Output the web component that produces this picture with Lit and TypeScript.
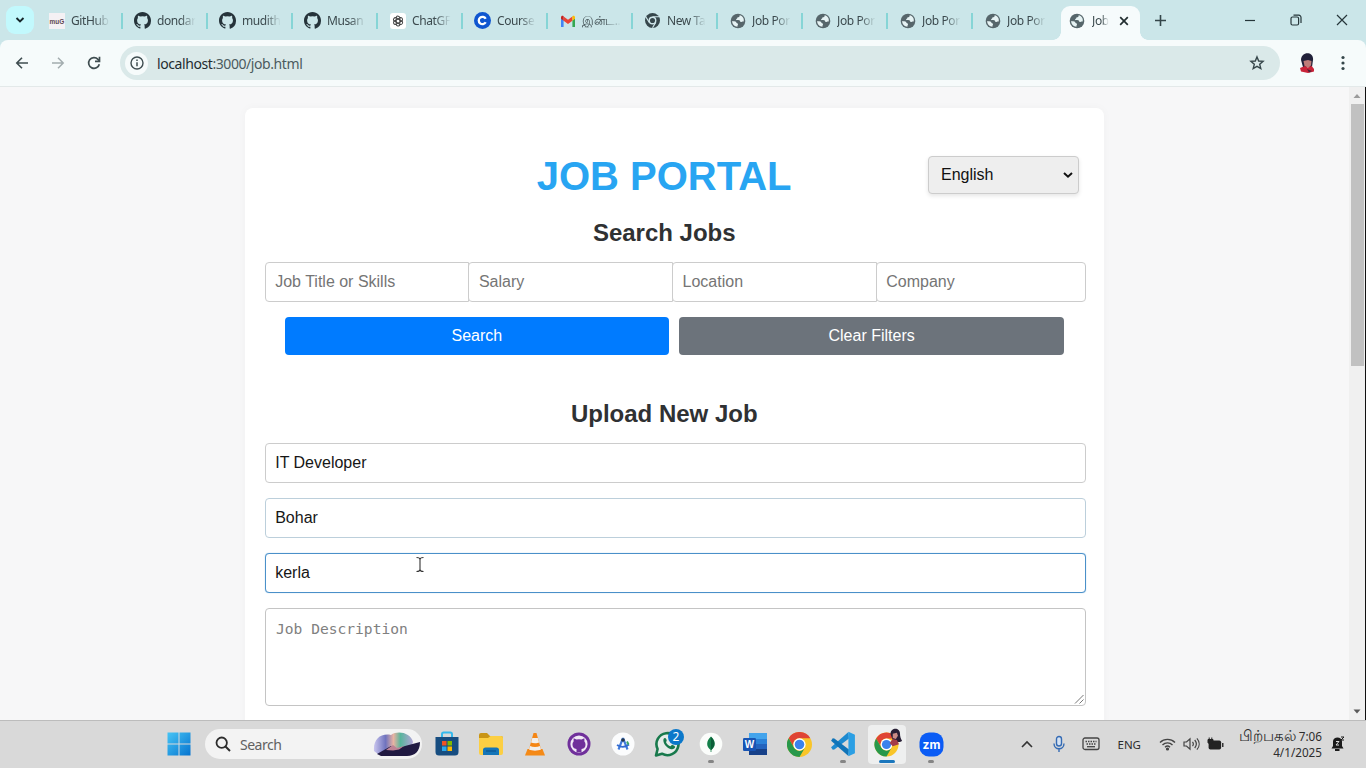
import { LitElement, html, css, svg } from "lit";
import { customElement } from "lit/decorators.js";
import { classMap } from "lit/directives/class-map.js";

type Tab = { icon: string; label: string; active?: boolean };

const github = html`<svg width="17" height="17" viewBox="0 0 16 16"><path fill="#25333a" d="M8 0C3.58 0 0 3.58 0 8c0 3.54 2.29 6.53 5.47 7.59.4.07.55-.17.55-.38v-1.33c-2.01.37-2.53-.49-2.69-.94-.09-.23-.48-.94-.82-1.13-.28-.15-.68-.52-.01-.53.63-.01 1.08.58 1.23.82.72 1.21 1.87.87 2.33.66.07-.52.28-.87.51-1.07-1.78-.2-3.64-.89-3.64-3.95 0-.87.31-1.59.82-2.15-.08-.2-.36-1.02.08-2.12 0 0 .67-.21 2.2.82a7.6 7.6 0 0 1 4 0c1.53-1.04 2.2-.82 2.2-.82.44 1.1.16 1.92.08 2.12.51.56.82 1.27.82 2.15 0 3.07-1.87 3.75-3.65 3.95.29.25.54.73.54 1.48v2.19c0 .21.15.46.55.38A8 8 0 0 0 16 8c0-4.42-3.58-8-8-8z"/></svg>`;
const globe = html`<svg width="16" height="16" viewBox="0 0 16 16"><circle cx="8" cy="8" r="7.3" fill="#56666b"/><path fill="#e6f3f4" d="M9.600 2.300c.3 1.600-.7 2-1.800 2-.6.1-.3 1.100-1 1.400-.8.300-.9.900-.4 1.200.7.400 2.600-.1 3.400.7.500.6.200 1.300 1 1.500.9.200 1.300-.9 2.900-.7C14.400 5.500 12.600 3 9.600 2.300zM2.200 7.900c1.400.2 3 .2 3.700.9.700.7.300 1.300 1.200 1.500 1 .2 1.200 1.100.6 1.900-.4.600-.2 1-.2 1.500C4.600 13.500 2 11 2.200 7.900z"/></svg>`;

const chromeArt = (red: string, yellow: string, green: string, blue: string) => svg`
  <circle cx="12" cy="12" r="12" fill="${yellow}"/>
  <path fill="${red}" d="M1.600 6a12 12 0 0 1 20.800 0H12a6 6 0 0 0-5.200 9z"/>
  <path fill="${green}" d="M1.600 6A12 12 0 0 0 12 24l5.200-9a6 6 0 0 1-10.400 0z"/>
  <circle cx="12" cy="12" r="5.900" fill="#fff"/><circle cx="12" cy="12" r="4.600" fill="${blue}"/>`;

const favicons: Record<string, unknown> = {
  mug: html`<svg width="16" height="16" viewBox="0 0 16 16"><rect width="16" height="16" fill="#f4f1f4"/><text x="8" y="10.500" text-anchor="middle" font-family="Liberation Sans" font-weight="700" font-size="6.500" fill="#5d4850">muG</text></svg>`,
  github,
  globe,
  gpt: html`<svg width="16" height="16" viewBox="0 0 16 16"><rect width="16" height="16" rx="3" fill="#fff"/><g fill="none" stroke="#444" stroke-width="1.300" transform="translate(1.800 1.800) scale(.78)">${[0, 60, 120, 180, 240, 300].map(
    (a) => svg`<path transform="rotate(${a} 8 8)" d="M8 5.300l2.400 1.400V3.900A2.500 2.500 0 0 0 5.700 3v3.600"/>`
  )}</g></svg>`,
  coursera: html`<svg width="17" height="17" viewBox="0 0 17 17"><circle cx="8.500" cy="8.500" r="8.500" fill="#0f56d0"/><path d="M11.700 6.700a3.700 3.700 0 1 0 0 3.600" fill="none" stroke="#fff" stroke-width="2.300"/></svg>`,
  gmail: html`<svg width="16" height="16" viewBox="0 0 16 16"><path fill="#4285f4" d="M1 14h2.600V7.300L1 5.300z"/><path fill="#34a853" d="M12.400 14H15V5.300l-2.600 2z"/><path fill="#ea4335" d="M3.600 7.700V3.400L8 6.700l4.400-3.300v4.300L8 11z"/><path fill="#c5221f" d="M1 4.300v1.500l2.600 1.900V3.300C2.500 2.200 1 3 1 4.300z"/><path fill="#fbbc04" d="M15 4.300v1.500l-2.600 1.900V3.300C13.500 2.200 15 3 15 4.300z"/></svg>`,
  chrome: html`<svg width="15" height="15" viewBox="0 0 24 24"><circle cx="12" cy="12" r="12" fill="#36474c"/><circle cx="12" cy="12" r="5.200" fill="#36474c" stroke="#cfe6ea" stroke-width="2.200"/><path d="M12 6h10.500M6.800 15L1.500 6.300M17.200 15L12 23.500" stroke="#cfe6ea" stroke-width="1.800"/></svg>`,
};

const tabs: Tab[] = [
  { icon: "mug", label: "GitHub" },
  { icon: "github", label: "dondar" },
  { icon: "github", label: "mudith" },
  { icon: "github", label: "Musan" },
  { icon: "gpt", label: "ChatGF" },
  { icon: "coursera", label: "Course" },
  { icon: "gmail", label: "இன்ட..." },
  { icon: "chrome", label: "New Ta" },
  { icon: "globe", label: "Job Por" },
  { icon: "globe", label: "Job Por" },
  { icon: "globe", label: "Job Por" },
  { icon: "globe", label: "Job Por" },
  { icon: "globe", label: "Job", active: true },
];

@customElement("browser-chrome")
class BrowserChrome extends LitElement {
  static styles = css`
    :host { display: block; font-family: "Noto Sans", "Open Sans", sans-serif; color: #3c4a4e; }
    svg { display: block; flex: none; }
    .strip { height: 40px; background: #cbe6e9; display: flex; align-items: stretch; padding-left: 6px; }
    .search-tabs { width: 28px; height: 28px; margin: 6px 4px 0 0; border-radius: 9px; background: #c2f9fd; display: grid; place-items: center; }
    .tab { width: 85px; flex: none; box-sizing: border-box; height: 40px; display: flex; align-items: center; padding: 1px 0 0 10px; }
    .fav { width: 17px; flex: none; display: grid; place-items: center; }
    .label { width: 42px; flex: none; margin-left: 6px; font-size: 12px; line-height: 20px; letter-spacing: -0.4px; white-space: nowrap; -webkit-mask-image: linear-gradient(90deg, #000 55%, transparent 92%); mask-image: linear-gradient(90deg, #000 55%, transparent 92%); }
    .sep { width: 2px; flex: none; height: 16px; background: #86d5d6; margin-left: 8px; }
    .tab:nth-child(n + 3):not(.active) { padding-left: 11px; }
    .tab:nth-child(n + 3):not(.active) .sep { margin-left: 7px; }
    .active { width: 79px; height: 34px; margin: 6px 0 0 3px; padding: 0 0 5px 7px; background: #f6fbfc; border-radius: 9px 9px 0 0; position: relative; }
    .active::before, .active::after { content: ""; position: absolute; bottom: 0; width: 8px; height: 8px; }
    .active::before { left: -8px; background: radial-gradient(circle at 0 0, transparent 7.5px, #f6fbfc 8px); }
    .active::after { right: -8px; background: radial-gradient(circle at 100% 0, transparent 7.5px, #f6fbfc 8px); }
    .active .label { width: 21px; margin-left: 7px; -webkit-mask-image: linear-gradient(90deg, #000 45%, transparent 80%); mask-image: linear-gradient(90deg, #000 45%, transparent 80%); }
    .active .close { margin-left: 6px; }
    .before .sep { visibility: hidden; }
    .plus { margin: 15px 0 0 15px; }
    .win { margin-left: auto; display: flex; gap: 34px; padding: 14px 18px 0 0; }
    .bar { height: 47px; box-sizing: border-box; background: #f6fbfb; border-bottom: 1px solid #e3e9e9; display: flex; align-items: center; padding: 0 15px 0 14px; border-radius: 8px 8px 0 0; }
    .under { background: #cbe6e9; }
    .nav { display: flex; gap: 20px; }
    .omni { margin-left: 18px; width: 1160px; height: 34px; border-radius: 17px; background: #dae9e9; display: flex; align-items: center; box-sizing: border-box; padding: 0 15px 0 5px; }
    .info { width: 23px; height: 23px; border-radius: 50%; background: #f6fbfb; display: grid; place-items: center; }
    .url { margin-left: 9px; font-size: 14px; color: #4b5b5f; letter-spacing: -0.42px; }
    .url b { font-weight: 400; color: #1f2c30; }
    .star { margin-left: auto; }
    .avatar { margin-left: 19px; }
    .dots { margin-left: 26px; }
  `;
  render() {
    return html`
      <div class="strip">
        <div class="search-tabs"><svg width="10" height="8" viewBox="0 0 10 8"><path d="M1.500 2L5 5.500 8.500 2" fill="none" stroke="#17272b" stroke-width="1.900"/></svg></div>
        ${tabs.map(
          (t, i) => html`<div class=${classMap({ tab: true, active: !!t.active, before: i === tabs.length - 2 })}>
            <div class="fav">${favicons[t.icon]}</div>
            <div class="label">${t.label}</div>
            ${t.active
              ? html`<svg class="close" width="10" height="10" viewBox="0 0 10 10"><path d="M1.200 1.200l7.600 7.600M8.800 1.200L1.200 8.800" stroke="#222e31" stroke-width="1.700"/></svg>`
              : html`<div class="sep"></div>`}
          </div>`
        )}
        <svg class="plus" width="11" height="11" viewBox="0 0 11 11"><path d="M5.500 0v11M0 5.500h11" stroke="#34464a" stroke-width="1.600"/></svg>
        <div class="win">
          <svg width="12" height="12" viewBox="0 0 12 12"><path d="M1 6.500h10" stroke="#26363a" stroke-width="1.200"/></svg>
          <svg width="12" height="12" viewBox="0 0 12 12"><rect x="1" y="3" width="7.600" height="8" rx="1.500" fill="none" stroke="#26363a" stroke-width="1.200"/><path d="M3.500 1.200h5.300a2.200 2.200 0 0 1 2.200 2.200V9" fill="none" stroke="#26363a" stroke-width="1.200"/></svg>
          <svg width="12" height="12" viewBox="0 0 12 12"><path d="M1 1l10 10M11 1L1 11" stroke="#26363a" stroke-width="1.200"/></svg>
        </div>
      </div>
      <div class="under"><div class="bar">
        <div class="nav">
          <svg width="16" height="16" viewBox="0 0 16 16"><path d="M14 8H3M8 2.800L2.800 8 8 13.200" fill="none" stroke="#3f4d50" stroke-width="1.600"/></svg>
          <svg width="16" height="16" viewBox="0 0 16 16"><path d="M2 8h11M8 2.800L13.200 8 8 13.200" fill="none" stroke="#a3adaf" stroke-width="1.500"/></svg>
          <svg width="16" height="16" viewBox="0 0 16 16"><path d="M13.300 9.200A5.400 5.400 0 1 1 12 4.300l1.300 1.300" fill="none" stroke="#3f4d50" stroke-width="1.700"/><path d="M13.500 1.700v4.600H9" fill="none" stroke="#3f4d50" stroke-width="1.700"/></svg>
        </div>
        <div class="omni">
          <div class="info"><svg width="14" height="14" viewBox="0 0 14 14"><circle cx="7" cy="7" r="6" fill="none" stroke="#3f4d50" stroke-width="1.400"/><path d="M7 6.200v4M7 3.600v1.500" stroke="#3f4d50" stroke-width="1.500"/></svg></div>
          <div class="url"><b>localhost</b>:3000/job.html</div>
          <svg class="star" width="16" height="16" viewBox="0 0 16 16"><path d="M8 1.900l1.700 4.100 4.400.4-3.400 2.900 1.100 4.300L8 11.300l-3.800 2.300 1.100-4.300L1.900 6.400 6.300 6z" fill="none" stroke="#36464a" stroke-width="1.400"/></svg>
        </div>
        <svg class="avatar" width="16" height="20" viewBox="0 0 16 20"><path d="M2 7c0-9 13-9 12 0l-1 7H4z" fill="#202039"/><path d="M4.500 8L9 7l3.500 1-.4 4.300-2.600 2.700-4-2z" fill="#c07c78"/><path d="M1 15l5-2 3 1.800 3.500-2L15 16v2.500L9 20l-7-1.500z" fill="#c92338"/><path d="M8 16l5 2-3 1.500z" fill="#4c2038"/></svg>
        <svg class="dots" width="4" height="16" viewBox="0 0 4 16" fill="#35464a"><circle cx="2" cy="2.500" r="1.600"/><circle cx="2" cy="8" r="1.600"/><circle cx="2" cy="13.500" r="1.600"/></svg>
      </div></div>
    `;
  }
}

@customElement("job-page")
class JobPage extends LitElement {
  static styles = css`
    :host { display: flex; height: 633px; overflow: hidden; background: #f7f7f8; font-family: "Liberation Sans", Arial, sans-serif; }
    .view { flex: 1; padding: 21px 0 0 245px; overflow: hidden; }
    .card { width: 859px; height: 700px; box-sizing: border-box; background: #fff; border-radius: 8px; padding: 0 18px 0 19.5px; box-shadow: 0 0 10px rgba(0, 0, 0, 0.03); }
    .head { display: flex; padding: 45px 7.500px 0 0; height: 44px; justify-content: flex-end; align-items: center; }
    h1 { margin: 2px 136.500px 0 0; font-size: 40px; line-height: 44px; color: #28a5f2; white-space: nowrap; }
    .lang { box-sizing: border-box; width: 150.500px; height: 38px; display: flex; align-items: center; justify-content: space-between; padding: 0 5px 1px 12px; border: 1px solid #ccc; border-radius: 4px; background: #eee; font-size: 16px; color: #111; box-shadow: 0 2px 4px rgba(0, 0, 0, 0.1); }
    h2 { margin: 0; font-size: 24px; line-height: 28px; color: #2f3133; text-align: center; padding-right: 22px; }
    .first { margin-top: 22px; }
    .second { margin-top: 45px; }
    .filters { margin-top: 15px; display: flex; }
    .box { box-sizing: border-box; height: 40px; border: 1px solid #ccc; border-radius: 4px; padding: 0 9.700px 1px; display: flex; align-items: center; font-size: 16px; background: #fff; color: #757575; }
    .filters .box { width: 204.700px; margin-right: -1px; border-radius: 4px 0 0 4px; }
    .filters .box:last-child { flex: 1; margin: 0; border-radius: 4px; }
    .buttons { display: flex; gap: 10px; margin: 15px 22px 0 20px; }
    .btn { flex: 1; height: 38px; box-sizing: border-box; padding-bottom: 1px; border-radius: 4px; display: grid; place-items: center; font-size: 16px; color: #fff; }
    .go { background: #007bff; }
    .clear { background: #6c737b; }
    .fields { margin-top: 15px; display: flex; flex-direction: column; gap: 15px; }
    .val { color: #161616; }
    .soft { border-color: #bccfdb; }
    .focus { border-color: #4a90c9; box-shadow: 0 0 1px #7db5e2; }
    .area { box-sizing: border-box; height: 98px; border: 1px solid #c4c4c4; border-radius: 4px; padding: 10px 0 0 10.500px; font: 14.600px/20px "DejaVu Sans Mono", monospace; color: #808080; display: flex; justify-content: space-between; }
    .grip { align-self: flex-end; }
    .scroll { width: 17px; box-sizing: border-box; background: #f0f0f0; display: flex; flex-direction: column; align-items: center; border-right: 1px solid #111; padding-top: 6px; }
    .thumb { width: 13px; height: 262px; margin-top: 5px; background: #c1c1c1; }
    .down { margin: auto 0 6px; }
    svg { display: block; flex: none; }
  `;
  render() {
    return html`
      <div class="view"><div class="card">
        <div class="head">
          <h1>JOB PORTAL</h1>
          <div class="lang">English<svg width="10" height="8" viewBox="0 0 10 8"><path d="M1 2l4 3.700L9 2" fill="none" stroke="#111" stroke-width="2"/></svg></div>
        </div>
        <h2 class="first">Search Jobs</h2>
        <div class="filters">${["Job Title or Skills", "Salary", "Location", "Company"].map((p) => html`<div class="box">${p}</div>`)}</div>
        <div class="buttons"><div class="btn go">Search</div><div class="btn clear">Clear Filters</div></div>
        <h2 class="second">Upload New Job</h2>
        <div class="fields">
          <div class="box val">IT Developer</div>
          <div class="box val soft">Bohar</div>
          <div class="box val focus">kerla</div>
          <div class="area"><span>Job Description</span><svg class="grip" width="12" height="12" viewBox="0 0 12 12"><path d="M2 10.500L10.500 2M6.500 10.500l4-4" stroke="#777" stroke-width="1"/></svg></div>
        </div>
      </div></div>
      <div class="scroll">
        <svg width="8" height="6" viewBox="0 0 8 6"><path d="M4 1l3.500 4h-7z" fill="#9b9b9b"/></svg>
        <div class="thumb"></div>
        <svg class="down" width="8" height="6" viewBox="0 0 8 6"><path d="M4 5.500l3.500-4h-7z" fill="#5a5a5a"/></svg>
      </div>
    `;
  }
}

const face = svg`<path d="M16 7c-1-7 9-8 9-1 0 3 1 5 2 7l-2 1h-6z" fill="#281f35"/><path d="M18 6l4-1 1 3-2 3-3-1z" fill="#c98b86"/><path d="M15 15l3-4 4 1 2 4-6 2z" fill="#a43c48"/>`;

const apps: { art: unknown; run?: boolean; active?: boolean }[] = [
  { art: html`<svg width="24" height="26" viewBox="0 0 24 26"><path d="M7 7V3.200C7 2 7.500 1.500 8.700 1.500h6.600c1.200 0 1.700.5 1.700 1.700V7" fill="none" stroke="#35b9ec" stroke-width="2"/><path d="M0.500 6h23v15a3.500 3.500 0 0 1-3.500 3.500H4A3.500 3.500 0 0 1 .5 21z" fill="#174d80"/><path d="M7 10h4.500v4.500H7z" fill="#f05325"/><path d="M12.500 10H17v4.500h-4.500z" fill="#7fba00"/><path d="M7 15.500h4.500V20H7z" fill="#29a9ee"/><path d="M12.500 15.500H17V20h-4.500z" fill="#ffb900"/></svg>` },
  { art: html`<svg width="26" height="24" viewBox="0 0 26 24"><path d="M1 3a2 2 0 0 1 2-2h6l3 3h11a2 2 0 0 1 2 2v4H1z" fill="#c99516"/><path d="M1 6h9l2.500-2H23a2 2 0 0 1 2 2v15a2 2 0 0 1-2 2H3a2 2 0 0 1-2-2z" fill="#fccf43"/><path d="M5 23v-5a2.500 2.500 0 0 1 2.500-2.500h11A2.500 2.500 0 0 1 21 18v5z" fill="#1475b8"/><path d="M8 19h10" stroke="#0d5b98" stroke-width="1.500"/></svg>` },
  { art: html`<svg width="22" height="25" viewBox="0 0 22 25"><path d="M3.500 17h15l2.500 6.500H1z" fill="#f48a17"/><path d="M9.500 1h3L17.500 19c-2 1.500-11 1.500-13 0z" fill="#f58615"/><path d="M8.300 6h5.500l1.300 4.500c-2 1-6 1-8.100 0zM6 14c3 1.300 7 1.300 10 0l1 3.500c-3 1.500-9 1.500-12 0z" fill="#f2efec"/></svg>` },
  { art: html`<svg width="24" height="24" viewBox="0 0 24 24"><circle cx="12" cy="12" r="11.500" fill="#70309b"/><circle cx="12" cy="12" r="8.600" fill="#f1e9f6"/><path d="M9.500 20v-3c-3-.5-4-2-4-4.500 0-1.400.4-2.300 1.100-3.100V6.300l2.900 1.300a10 10 0 0 1 5 0l2.900-1.300v3.100c.7.8 1.100 1.700 1.100 3.100 0 2.500-1 4-4 4.500v3z" fill="#70309b"/></svg>` },
  { art: html`<svg width="24" height="24" viewBox="0 0 24 24"><circle cx="12" cy="12" r="11.500" fill="#fbfcfd"/><path d="M12 6L7.500 17.500M12 6l4.500 11.500" stroke="#3f7bdc" stroke-width="2.100"/><path d="M6 13c4 2.500 8 2.500 12-.5" stroke="#326bd1" stroke-width="1.800" fill="none"/><circle cx="12" cy="8" r="1.800" fill="#26374a"/><path d="M16 9.500l1.500 3" stroke="#3ea865" stroke-width="2"/></svg>` },
  { art: html`<svg width="34" height="30" viewBox="-4 1.500 34 30"><path d="M2 28l1.600-6.500A11 11 0 1 1 8 26.200z" fill="#e6ece9" stroke="#18794c" stroke-width="2.600" stroke-linejoin="round"/><path d="M9.500 11.500c.8-1.500 2.100-1.500 2.700 0 .6 1.300.8 1.800 0 2.700-.7.700 2.400 4.200 4.200 4.500.8.100 1-1.600 2-1.300 1 .3 2.900 1.300 2.800 1.900-.2 1.700-2 2.800-4 2.400-4-.7-8.800-5.800-7.700-10.200z" fill="#18794c"/><circle cx="22" cy="9.500" r="8" fill="#0b78ca"/><text x="22" y="13.700" text-anchor="middle" font-family="Noto Sans" font-size="12" fill="#fff">2</text></svg>` },
  { art: html`<svg width="24" height="24" viewBox="0 0 24 24"><circle cx="12" cy="12" r="11.300" fill="#fbfdfb"/><path d="M12 4.500c5 4.500 5 10 .4 13.500v2h-.8v-2C7 14.500 7 9 12 4.500z" fill="#14804a"/><path d="M12 5v13c4.500-4 4.300-9 0-13z" fill="#0b5d38"/></svg>`, run: true },
  { art: html`<svg width="26" height="24" viewBox="0 0 26 24"><rect x="7" y="1" width="18" height="22" rx="1.500" fill="#2464be"/><path d="M7 1h18v6H7z" fill="#43a4ec"/><path d="M7 7h18v5H7z" fill="#2c82d8"/><path d="M7 17h18v6H7z" fill="#174189"/><rect x="1" y="6" width="13" height="13" rx="1.200" fill="#1854b3"/><text x="7.500" y="16" text-anchor="middle" font-family="Liberation Sans" font-size="10" font-weight="700" fill="#fff">W</text></svg>` },
  { art: html`<svg width="25" height="25" viewBox="0 0 24 24">${chromeArt("#df4435", "#f9c528", "#28984b", "#3b82ed")}</svg>` },
  { art: html`<svg width="26" height="26" viewBox="0 0 24 24"><path d="M17 1L1 15l1.500 2.300L4 17 17.500 7z" fill="#1d8ad0"/><path d="M17 23L1 9l1.500-2.300L4 7l13.500 10z" fill="#1074b8"/><path d="M17 .7l6 2.800v17L17 23.300z" fill="#2b9fe4"/></svg>`, run: true },
  { art: html`<svg width="30" height="32" viewBox="0 0 30 32"><g transform="translate(2.500 4.500)">${chromeArt("#df4435", "#f9c528", "#28984b", "#3b82ed")}</g><g transform="translate(2 -.5) scale(1.040)">${face}</g></svg>`, run: true, active: true },
  { art: html`<svg width="25" height="25" viewBox="0 0 25 25"><rect x=".5" y=".5" width="24" height="24" rx="9.500" fill="#0b5cf5"/><text x="12.500" y="16.500" text-anchor="middle" font-family="Inter" font-size="12" font-weight="700" fill="#fff">zm</text></svg>`, run: true },
];

@customElement("task-bar")
class TaskBar extends LitElement {
  static styles = css`
    :host { display: flex; box-sizing: border-box; height: 48px; background: #d9d9d9; border-top: 1px solid #bcbcbc; font-family: "Noto Sans", "Open Sans", sans-serif; color: #2d2d2d; align-items: center; padding: 0 0 1px 167px; }
    svg { display: block; flex: none; }
    .search { width: 217px; height: 30px; border-radius: 15px; background: #f3f3f3; margin-left: 14px; display: flex; align-items: center; box-sizing: border-box; padding: 0 2px 0 10px; font-size: 14px; color: #616161; overflow: hidden; flex: none; }
    .word { margin-left: 9px; letter-spacing: -0.5px; }
    .scene { margin-left: auto; }
    .apps { display: flex; margin: 0 0 2px 3px; }
    .app { width: 44px; height: 47px; display: flex; justify-content: center; position: relative; }
    .tile { width: 38px; height: 39px; margin-top: 5px; border-radius: 4px; display: grid; place-items: center; }
    .on .tile { background: #eeefef; }
    .mark { position: absolute; bottom: 4px; left: 19px; width: 6px; height: 3px; border-radius: 2px; background: #858585; }
    .on .mark { left: 14px; width: 16px; background: #1b77bd; }
    .tray { margin-left: auto; display: flex; align-items: center; padding-right: 21px; }
    .mic { margin-left: 19px; }
    .kb { margin-left: 16px; }
    .eng { margin-left: 17px; font-size: 11.500px; }
    .wifi { margin-left: 18px; }
    .vol { margin-left: 7px; }
    .bat { margin-left: 7px; }
    .clock { margin-left: 10px; width: 88px; display: flex; flex-direction: column; align-items: flex-end; font-size: 11.700px; line-height: 16px; white-space: nowrap; }
    .tamil { font-size: 14.800px; line-height: 14px; }
    .bell { margin-left: 8px; }
  `;
  render() {
    return html`
      <svg width="24" height="24" viewBox="0 0 24 24"><defs><linearGradient id="w" x2="1" y2="1"><stop stop-color="#47c5f5"/><stop offset="1" stop-color="#0573cf"/></linearGradient></defs><path d="M.5.500h11v11H.5zM12.500.500h11v11h-11zM.5 12.500h11v11H.5zM12.500 12.500h11v11h-11z" fill="url(#w)"/></svg>
      <div class="search">
        <svg width="16" height="16" viewBox="0 0 16 16"><circle cx="6.700" cy="6.700" r="5.200" fill="none" stroke="#2d2d2d" stroke-width="1.800"/><path d="M10.500 10.500l4.500 4.500" stroke="#2d2d2d" stroke-width="2"/></svg>
        <span class="word">Search</span>
        <svg class="scene" width="47" height="26" viewBox="0 0 47 26"><defs><linearGradient id="s"><stop stop-color="#c9c5ee"/><stop offset=".3" stop-color="#6f73be"/><stop offset=".5" stop-color="#e9b3a2"/><stop offset=".68" stop-color="#58b59c"/><stop offset="1" stop-color="#b3a4d8"/></linearGradient></defs><path d="M1 20C0 8 8 2 18 4c7-5 20-2 22 7l-4 12H5z" fill="url(#s)"/><path d="M4 23l14-8 5 3 9-3 15-4c0 9-5 14-13 14H8z" fill="#211a42"/><path d="M13 19l7-5 4 3 7-2-5 3.500-6 1z" fill="#bf8295"/></svg>
      </div>
      <div class="apps">${apps.map((a) => html`<div class=${classMap({ app: true, on: !!a.active })}><div class="tile">${a.art}</div>${a.run ? html`<div class="mark"></div>` : ""}</div>`)}</div>
      <div class="tray">
        <svg width="12" height="8" viewBox="0 0 12 8"><path d="M1 7l5-5 5 5" fill="none" stroke="#333" stroke-width="1.600"/></svg>
        <svg class="mic" width="14" height="18" viewBox="0 0 14 18"><rect x="4.500" y="1.500" width="5" height="9.500" rx="2.500" fill="#d5e2f2" stroke="#356bb4" stroke-width="1.400"/><path d="M2 8.500c0 7 10 7 10 0M7 13.500V17" fill="none" stroke="#356bb4" stroke-width="1.400"/></svg>
        <svg class="kb" width="18" height="14" viewBox="0 0 18 14"><rect x="1" y="1" width="16" height="11.500" rx="2" fill="none" stroke="#444" stroke-width="1.300"/><path d="M3.500 4.500h11M4.500 7h9" stroke="#444" stroke-width="1.300" stroke-dasharray="1.500 1"/><path d="M5 9.700h8" stroke="#444" stroke-width="1.300"/></svg>
        <span class="eng">ENG</span>
        <svg class="wifi" width="17" height="14" viewBox="0 0 17 14" fill="none" stroke="#444" stroke-width="1.400"><path d="M1 5.500a10.600 10.600 0 0 1 15 0M3.500 8a7 7 0 0 1 10 0M6 10.300a3.600 3.600 0 0 1 5 0"/><circle cx="8.500" cy="12" r=".9" fill="#444"/></svg>
        <svg class="vol" width="17" height="14" viewBox="0 0 17 14" fill="none" stroke="#444" stroke-width="1.200"><path d="M1 5h2.500L7 1.800v10.400L3.500 9H1zM9.500 4.800c1 1.300 1 3.100 0 4.400M11.700 3c2 2.400 2 5.600 0 8M13.900 1.300c3 3.400 3 8 0 11.400"/></svg>
        <svg class="bat" width="17" height="14" viewBox="0 0 17 14"><rect x="1.600" y="3.500" width="12.500" height="9" rx="1.800" fill="#222"/><path d="M15 6h1.500v4H15z" fill="#333"/><path d="M1 2.500h5v3L3.500 8 1 5.500zM2.200.5v2M4.800.5v2" fill="#222" stroke="#222"/></svg>
        <div class="clock"><div><span class="tamil">பிற்பகல்</span> 7:06</div><div>4/1/2025</div></div>
        <svg class="bell" width="15" height="16" viewBox="0 0 15 16"><path d="M3 5.500C3 0 12 0 12 5.500V10l1.500 2.500h-12L3 10z" fill="#1b1b1b"/><path d="M5 14h4.500" stroke="#1b1b1b" stroke-width="2"/><path d="M6 5.500h3L6 9h3" fill="none" stroke="#ddd" stroke-width="1"/><path d="M11 1h3l-3 3h3" fill="none" stroke="#1b1b1b" stroke-width="1"/></svg>
      </div>
    `;
  }
}

@customElement("app-root")
class AppRoot extends LitElement {
  static styles = css`
    :host { display: block; position: relative; width: 1366px; height: 768px; overflow: hidden; background: #fff; }
    .cursor { position: absolute; left: 415px; top: 556px; }
  `;
  render() {
    return html`
      <browser-chrome></browser-chrome>
      <job-page></job-page>
      <task-bar></task-bar>
      <svg class="cursor" width="10" height="17" viewBox="0 0 10 17"><path d="M1.500 1.500C3.500 1.500 5 2 5 3.500 5 2 6.500 1.500 8.500 1.500M5 3.500v10M1.500 15.500c2 0 3.500-.5 3.500-2 0 1.500 1.500 2 3.500 2" fill="none" stroke="#333" stroke-width="1.100"/></svg>
    `;
  }
}
